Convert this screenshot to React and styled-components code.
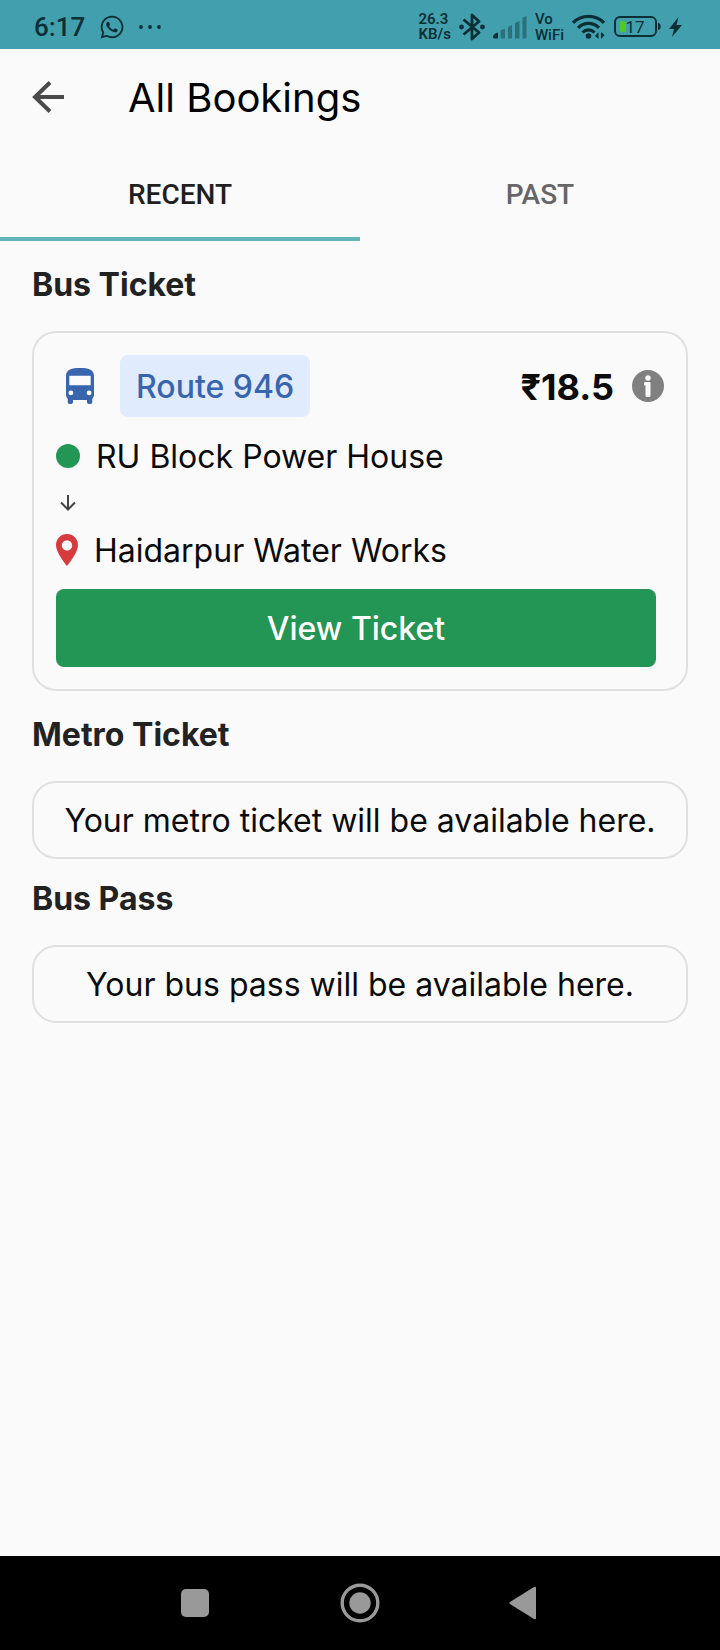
import React from "react";
import styled, { createGlobalStyle } from "styled-components";
import { FaWhatsapp } from "react-icons/fa";

const GlobalStyle = createGlobalStyle`
  *, *::before, *::after { box-sizing: border-box; }
  body {
    margin: 0;
    background: #fafafa;
    color: #0b0b0b;
    font-family: Inter, "Noto Sans", sans-serif;
    font-size: 32px;
    line-height: 38px;
  }
  button { font: inherit; border: 0; padding: 0; background: none; color: inherit; cursor: pointer; }
  h1, h2, p { margin: 0; }
  svg { display: block; flex: none; }
`;

const Screen = styled.div`
  min-height: 100vh;
  display: flex;
  flex-direction: column;
`;

const StatusBar = styled.div`
  height: 49px;
  padding: 4px 38px 0 34px;
  display: flex;
  align-items: center;
  justify-content: space-between;
  background: #42a0ae;
  color: #0b2f35;
  font-family: Roboto, sans-serif;
`;

const StatusGroup = styled.div`
  display: flex;
  align-items: center;
  gap: ${(p) => p.$gap}px;
`;

const Clock = styled.time`
  font-size: 26px;
  line-height: 32px;
  font-weight: 500;
`;

const TinyText = styled.span`
  display: flex;
  flex-direction: column;
  font-size: 15px;
  line-height: ${(p) => p.$leading}px;
  font-weight: ${(p) => p.$weight};
`;

const AppBar = styled.header`
  height: 96px;
  padding: 0 32px;
  display: flex;
  align-items: center;
  gap: 64px;
`;

const Title = styled.h1`
  padding-top: 2px;
  font-size: 40px;
  line-height: 48px;
  font-weight: 400;
  color: #000;
`;

const Tabs = styled.div`
  display: grid;
  grid-template-columns: 1fr 1fr;
  height: 96px;
`;

const Tab = styled.button`
  && {
    padding-top: 4px;
    font-family: Roboto, sans-serif;
    font-size: 28px;
    line-height: 32px;
    font-weight: 500;
    color: ${(p) => (p.$active ? "#1f1f1f" : "#666")};
    box-shadow: ${(p) => (p.$active ? "inset 0 -4px #62b5b9" : "none")};
  }
`;

const Main = styled.main`
  flex: 1;
  padding: 24px 32px;
`;

const Section = styled.section`
  display: flex;
  flex-direction: column;
  gap: 26px;
  padding-bottom: ${(p) => (p.$empty ? 20 : 24)}px;
`;

const SectionTitle = styled.h2`
  font-size: 32px;
  line-height: 40px;
  font-weight: 700;
  color: #222;
`;

const Card = styled.div`
  border: 2px solid #e0e0e0;
  border-radius: 24px;
`;

const TicketCard = styled(Card)`
  padding: 22px;
  display: flex;
  flex-direction: column;
  gap: 20px;
`;

const EmptyCard = styled(Card)`
  padding: 19px 20px 17px;
  text-align: center;
`;

const TicketHead = styled.div`
  display: flex;
  align-items: center;
  justify-content: space-between;
`;

const Route = styled.div`
  display: flex;
  align-items: center;
  gap: 26px;
  padding-left: 10px;
`;

const RouteChip = styled.span`
  padding: 13px 16px 11px;
  border-radius: 8px;
  background: #e0ebfe;
  color: #3865ae;
  font-weight: 500;
`;

const Fare = styled.div`
  display: flex;
  align-items: center;
  gap: 18px;
`;

const Price = styled.span`
  padding-top: 2px;
  font-size: 36px;
  font-weight: 700;
`;

const Stop = styled.div`
  display: flex;
  align-items: center;
  gap: 16px;
  height: 38px;
`;

const StopName = styled.span`
  padding-top: 2px;
`;

const Dot = styled.span`
  width: 24px;
  height: 24px;
  border-radius: 50%;
  background: #239554;
`;

const Toward = styled.div`
  width: 24px;
  display: flex;
  justify-content: center;
`;

const ViewButton = styled.button`
  && {
    margin-right: 8px;
    padding: 21px 20px 19px;
    border-radius: 8px;
    background: #239554;
    color: #fff;
    font-weight: 500;
  }
`;

const NavBar = styled.nav`
  height: 94px;
  display: flex;
  align-items: center;
  justify-content: center;
  gap: 125px;
  background: #000;
`;

const NavButton = styled.button`
  width: 40px;
  height: 40px;
`;

const Bluetooth = () => (
  <svg width="26" height="28" viewBox="0 0 26 28" fill="none" stroke="currentColor" strokeWidth="2.8">
    <path d="M4.500 6.500L20 19.500L13 26V2L20 8.500L4.500 21.500" strokeLinejoin="round" />
    <circle cx="2.500" cy="14" r="2.400" fill="currentColor" stroke="none" />
    <circle cx="23.500" cy="14" r="2.400" fill="currentColor" stroke="none" />
  </svg>
);

const Signal = () => (
  <svg width="34" height="24" viewBox="0 0 34 24" fill="currentColor">
    <path d="M0 22q0-3 5-4.500v6h-3.500q-1.500 0-1.500-1.500z" />
    <g opacity=".42">
      <path d="M7.500 15.500l4.500-2v10H7.500zM15 12l4-2v13.500h-4zM22 8l4.500-2v17.500H22zM29.500 3L33.500 1v22.500h-4z" />
    </g>
  </svg>
);

const Wifi = () => (
  <svg width="34" height="26" viewBox="0 0 34 26" fill="none" stroke="currentColor" strokeWidth="3.200">
    <path d="M1 8.800C9.500 .2 23.500 .2 32 8.800M6 13.800c6-6 15-6 21 0M10.500 18.500c3.500-3.600 8.500-3.600 12 0" />
    <circle cx="16.500" cy="22" r="2.800" fill="currentColor" stroke="none" />
    <path d="M26.500 18v7l-3.500-3zM29 25v-7l3.500 3z" fill="currentColor" stroke="none" />
  </svg>
);

const Battery = () => (
  <svg width="47" height="21" viewBox="0 0 47 21">
    <rect x="1" y="1" width="41" height="19" rx="5" fill="none" stroke="currentColor" strokeWidth="2" />
    <path d="M44 7c3.500 0 3.500 7 0 7z" fill="currentColor" />
    <rect x="6" y="5" width="6" height="11" rx="2" fill="#4fc926" />
    <text x="21" y="16.500" textAnchor="middle" fontSize="17" fontFamily="Roboto, sans-serif" fill="currentColor">17</text>
  </svg>
);

const Bolt = () => (
  <svg width="13" height="20" viewBox="0 0 13 20" fill="currentColor">
    <path d="M9.500 0L0 12h5L3 20l10-12H7.500z" />
  </svg>
);

const More = () => (
  <svg width="22" height="4" viewBox="0 0 22 4" fill="currentColor">
    <circle cx="2" cy="2" r="1.900" />
    <circle cx="11" cy="2" r="1.900" />
    <circle cx="20" cy="2" r="1.900" />
  </svg>
);

const BackArrow = () => (
  <svg width="32" height="32" viewBox="0 0 32 32" fill="none" stroke="#4a4a4a" strokeWidth="4">
    <path d="M32 16H3M18 1.500L3 16l15 14.500" />
  </svg>
);

const BusIcon = () => (
  <svg width="28" height="36" viewBox="0 0 28 36" fill="#3865ae">
    <path
      fillRule="evenodd"
      d="M0 8C0 1.500 6 0 14 0s14 1.500 14 8v18.500c0 1.700-.6 3.200-1.700 4.200V34c0 1-.8 2-1.800 2h-1.700c-1 0-1.800-1-1.800-2v-2H7v2c0 1-.8 2-1.800 2H3.500c-1 0-1.800-1-1.800-2v-3.300C.6 29.700 0 28.200 0 26.500zM3.300 7.800v9.500h21.400V7.800zM4.900 22.500a2.400 2.400 0 1 0 0 4.800a2.400 2.400 0 0 0 0-4.800zM23.100 22.500a2.400 2.400 0 1 0 0 4.800a2.400 2.400 0 0 0 0-4.800z"
    />
  </svg>
);

const InfoIcon = () => (
  <svg width="32" height="32" viewBox="0 0 32 32">
    <circle cx="16" cy="16" r="16" fill="#808080" />
    <g fill="#fafafa">
      <circle cx="16" cy="8" r="2.700" />
      <path d="M13 12h4.500q1 0 1 1v12.500q0 1.500-1.500 1.500h-2q-1.500 0-1.500-1.500V15.500H13q-1 0-1-1V13q0-1 1-1z" />
    </g>
  </svg>
);

const DownArrow = () => (
  <svg width="16" height="16" viewBox="0 0 16 16" fill="none" stroke="#444" strokeWidth="2">
    <path d="M8 0v14.500M1 7.500l7 7l7-7" />
  </svg>
);

const Pin = () => (
  <svg width="22" height="32" viewBox="0 0 22 32" fill="#d63c3e">
    <path fillRule="evenodd" d="M11 0C4.900 0 0 4.900 0 11c0 8 11 21 11 21s11-13 11-21C22 4.900 17.100 0 11 0zM11 6.200a5.200 5.200 0 1 1 0 10.400a5.200 5.200 0 0 1 0-10.400z" />
  </svg>
);

export default function App() {
  return (
    <Screen>
      <GlobalStyle />
      <StatusBar>
        <StatusGroup $gap={14}>
          <Clock>6:17</Clock>
          <FaWhatsapp size={26} />
          <More />
        </StatusGroup>
        <StatusGroup $gap={8}>
          <TinyText $leading={15} $weight={600}>
            <span>26.3</span>
            <span>KB/s</span>
          </TinyText>
          <Bluetooth />
          <Signal />
          <TinyText $leading={16} $weight={500}>
            <span>Vo</span>
            <span>WiFi</span>
          </TinyText>
          <Wifi />
          <Battery />
          <Bolt />
        </StatusGroup>
      </StatusBar>
      <AppBar>
        <button type="button" aria-label="Back">
          <BackArrow />
        </button>
        <Title>All Bookings</Title>
      </AppBar>
      <Tabs role="tablist">
        <Tab type="button" role="tab" aria-selected="true" $active>RECENT</Tab>
        <Tab type="button" role="tab" aria-selected="false">PAST</Tab>
      </Tabs>
      <Main>
        <Section>
          <SectionTitle>Bus Ticket</SectionTitle>
          <TicketCard>
            <TicketHead>
              <Route>
                <BusIcon />
                <RouteChip>Route 946</RouteChip>
              </Route>
              <Fare>
                <Price>₹18.5</Price>
                <button type="button" aria-label="Fare details">
                  <InfoIcon />
                </button>
              </Fare>
            </TicketHead>
            <Stop>
              <Dot />
              <StopName>RU Block Power House</StopName>
            </Stop>
            <Toward>
              <DownArrow />
            </Toward>
            <Stop>
              <Pin />
              <StopName>Haidarpur Water Works</StopName>
            </Stop>
            <ViewButton type="button">View Ticket</ViewButton>
          </TicketCard>
        </Section>
        <Section $empty>
          <SectionTitle>Metro Ticket</SectionTitle>
          <EmptyCard as="p">Your metro ticket will be available here.</EmptyCard>
        </Section>
        <Section $empty>
          <SectionTitle>Bus Pass</SectionTitle>
          <EmptyCard as="p">Your bus pass will be available here.</EmptyCard>
        </Section>
      </Main>
      <NavBar>
        <NavButton type="button" aria-label="Recent apps">
          <svg width="40" height="40" viewBox="0 0 40 40" fill="#999">
            <rect x="6" y="6" width="28" height="28" rx="5" />
          </svg>
        </NavButton>
        <NavButton type="button" aria-label="Home">
          <svg width="40" height="40" viewBox="0 0 40 40" fill="#999">
            <circle cx="20" cy="20" r="17.800" fill="none" stroke="#999" strokeWidth="3.400" />
            <circle cx="20" cy="20" r="10.700" />
          </svg>
        </NavButton>
        <NavButton type="button" aria-label="Go back">
          <svg width="40" height="40" viewBox="0 0 40 40" fill="#999">
            <path d="M31 5v30q0 2-2 1L5 21q-1.500-1 0-2L29 4q2-1 2 1z" />
          </svg>
        </NavButton>
      </NavBar>
    </Screen>
  );
}
